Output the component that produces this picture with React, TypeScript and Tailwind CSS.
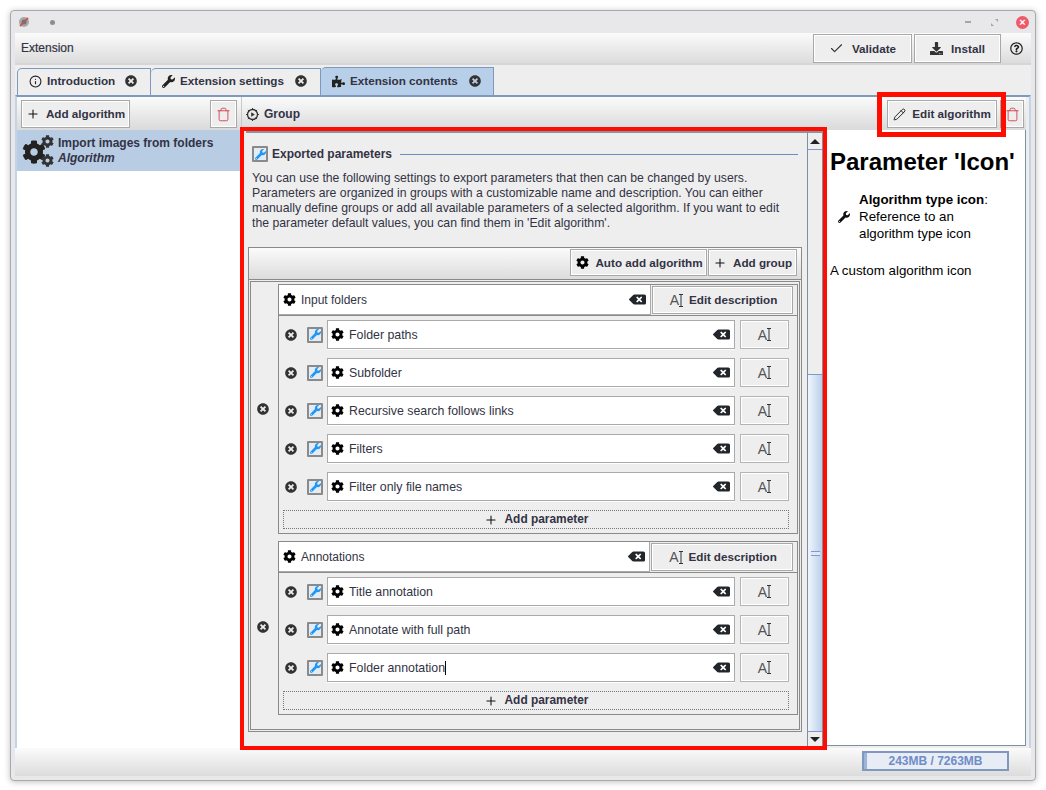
import React from 'react';
import { Check, Info, Pencil, Plus, Trash } from 'lucide-react';
import { FaBackspace, FaCog, FaDownload, FaPuzzlePiece, FaRegQuestionCircle, FaTimesCircle, FaWrench } from 'react-icons/fa';

const barGradient = 'bg-gradient-to-b from-[#fbfbfb] to-[#dcdcdc]';
const buttonClass = 'flex items-center justify-center gap-2 border border-[#a8a8a8] bg-[#eeeeee] text-[11.7px] font-bold text-[#333344] shadow-[inset_0_0_0_1px_#ffffff]';

const TextIcon = () => (
  <span className="flex items-center text-[14px] leading-none font-normal text-[#555]">
    A
    <svg width="4" height="13" viewBox="0 0 4 13">
      <path d="M0 .5h4M0 12.5h4M2 0v13" stroke="#333" fill="none" />
    </svg>
  </span>
);

const ExportIcon = () => (
  <span className="flex h-4 w-4 shrink-0 items-center justify-center rounded-[1px] border-2 border-[#8a8a8a] bg-[#e3ebf5]">
    <FaWrench size={11} className="text-[#2196f3]" />
  </span>
);

const GroupIcon = () => (
  <svg width="13" height="13" viewBox="0 0 13 13" className="shrink-0">
    <circle cx="6.5" cy="6.5" r="5" fill="none" stroke="#333" strokeWidth="1.3" />
    <path d="M6.5 0v2M6.5 11v2M0 6.5h2M11 6.5h2M1.9 1.9l1.3 1.3M9.8 9.8l1.3 1.3M11.1 1.9L9.8 3.2M3.2 9.8l-1.3 1.3" stroke="#333" />
    <path d="M5.2 4.2v4.6l3.6-2.3z" fill="#333" />
  </svg>
);

const ClearIcon = () => <FaBackspace size={17} className="shrink-0 text-[#22262b]" />;

const TabClose = () => <FaTimesCircle size={12} className="text-[#333]" />;

const AddParameter = () => (
  <div className="mr-[8px] ml-[4px] flex h-[19px] items-center justify-center gap-[7px] border border-dotted border-[#777] pt-[1px] text-[11.9px] font-bold text-[#333344]">
    <Plus size={14} strokeWidth={1.8} className="text-[#111]" />
    Add parameter
  </div>
);

const ParamRow = ({ name, caret }: { name: string; caret?: boolean }) => (
  <div className="flex h-[29px] items-center">
    <div className="w-[28px] pl-[6px]">
      <FaTimesCircle size={12} className="text-[#333]" />
    </div>
    <ExportIcon />
    <div className="ml-[4px] flex h-[29px] w-[408px] items-center border border-[#aaaaaa] bg-white pr-[4px] pl-[3px] shadow-[0_1px_0_#ffffff]">
      <FaCog size={13} className="shrink-0 text-black" />
      <span className="ml-[5px] flex-1 pt-[1px] text-[12.35px] text-[#333344]">
        {name}
        {caret && <span className="inline-block h-[14px] w-px translate-y-[3px] bg-black" />}
      </span>
      <ClearIcon />
    </div>
    <div className="ml-[5px] flex h-[29px] w-[49px] items-center justify-center border border-[#b4b4b4] bg-[#eeeeee] shadow-[inset_0_0_0_1px_#ffffff]">
      <TextIcon />
    </div>
  </div>
);

const ParamGroup = ({ name, inputWidth, params, closeTop, caret }: { name: string; inputWidth: string; params: string[]; closeTop: string; caret?: string }) => (
  <div className="relative ml-[27px] w-[520px] border border-[#8a8a8a] pb-[4px]">
    <FaTimesCircle size={12} className={`absolute left-[-22px] text-[#333] ${closeTop}`} />
    <div className="flex h-[31px] items-start border-b border-[#8a8a8a]">
      <div className={`flex h-[30px] items-center border-r border-b border-[#aaaaaa] bg-white pr-[4px] pl-[4px] ${inputWidth}`}>
        <FaCog size={13} className="shrink-0 text-black" />
        <span className="ml-[5px] flex-1 text-[12px] text-[#333344]">{name}</span>
        <ClearIcon />
      </div>
      <div className={`${buttonClass} mt-[1px] mr-[4px] ml-[1px] h-[28px] flex-1 gap-[6px] pl-[2px]`}>
        <TextIcon />
        Edit description
      </div>
    </div>
    <div className="flex flex-col gap-[9px] pt-[4px] pb-[9px]">
      {params.map(p => (
        <ParamRow key={p} name={p} caret={p === caret} />
      ))}
    </div>
    <AddParameter />
  </div>
);

const Scrollbar = () => (
  <div className="flex w-[16px] shrink-0 flex-col border-x border-[#7f8fa3] bg-[#eeeeee]">
    <div className="flex h-[17px] items-center justify-center border-b border-[#7c9ad0]">
      <div className="h-0 w-0 border-x-[5px] border-b-[5px] border-x-transparent border-b-[#222]" />
    </div>
    <div className="h-[224px]" />
    <div className="flex h-[358px] items-center justify-center border-y border-[#7c9ad0] bg-gradient-to-r from-[#f2f6fb] to-[#b9d0ea]">
      <div className="h-[5px] w-[9px] border-y border-[#7c9ad0] bg-[#dfe8f4]" />
    </div>
    <div className="flex flex-1 items-center justify-center">
      <div className="h-0 w-0 border-x-[5px] border-t-[5px] border-x-transparent border-t-[#222]" />
    </div>
  </div>
);

export default function App() {
  return (
    <div className="relative h-[790px] w-[1046px] overflow-hidden bg-white pt-[10px] pl-[10px] font-['Liberation_Sans',sans-serif]">
      <div className="flex h-[771px] w-[1026px] flex-col rounded-[4px] border border-[#a9a9a9] bg-[#e8e8ea] shadow-[0_1px_6px_rgba(0,0,0,0.25)]">
        {/* title bar */}
        <div className="flex h-[22px] shrink-0 items-center pr-[6px] pl-[6px]">
          <svg width="14" height="14" viewBox="0 0 14 14">
            <circle cx="7" cy="7" r="5" fill="#a8a8a8" />
            <path d="M3 11L11 3" stroke="#c25b5b" strokeWidth="2" />
            <circle cx="7" cy="7" r="2.5" fill="#8c6a6a" />
          </svg>
          <div className="ml-[19px] h-[5px] w-[5px] rounded-full bg-[#8b8e94]" />
          <div className="flex-1" />
          <div className="h-[2px] w-[6px] bg-[#a3a6ab]" />
          <svg width="7" height="7" viewBox="0 0 7 7" className="ml-[20px]">
            <path d="M4 0h3v3zM0 4v3h3z" fill="#a3a6ab" />
          </svg>
          <div className="ml-[18px] flex h-[13px] w-[13px] items-center justify-center rounded-full bg-[#ee5a6a] text-[11px] leading-none font-bold text-white">×</div>
        </div>

        <div className="mx-[4px] mb-[4px] flex min-h-0 flex-1 flex-col bg-[#eeeeee]">
          {/* toolbar */}
          <div className={`flex h-[32px] shrink-0 items-center border-b-2 border-[#d6d6d6] pl-[6px] ${barGradient}`}>
            <span className="flex-1 text-[12px] text-[#333344] [-webkit-text-stroke:0.2px_#333344]">Extension</span>
            <div className={`${buttonClass} h-[29px] w-[99px] pt-[1px]`}>
              <Check size={15} strokeWidth={1.8} className="text-[#333]" />
              Validate
            </div>
            <div className={`${buttonClass} ml-[2px] h-[29px] w-[87px] pt-[1px]`}>
              <FaDownload size={13} className="text-[#333]" />
              Install
            </div>
            <div className="flex w-[30px] justify-center">
              <FaRegQuestionCircle size={13} className="text-[#222]" />
            </div>
          </div>

          {/* tabs */}
          <div className="mt-[2px] flex h-[28px] shrink-0 items-end pl-[2px]">
            <div className="flex h-[27px] w-[134px] items-center gap-[5px] rounded-tl-[5px] border border-b-0 border-[#7f98bd] bg-[#eeeeee] pb-[2px] pl-[11px] text-[11.7px] font-bold text-[#333344]">
              <Info size={13} strokeWidth={2} className="text-[#222]" />
              <span className="mr-[5px]">Introduction</span>
              <TabClose />
            </div>
            <div className="flex h-[27px] w-[170px] items-center gap-[5px] rounded-tl-[5px] border border-b-0 border-l-0 border-[#7f98bd] bg-[#eeeeee] pb-[2px] pl-[11px] text-[11.7px] font-bold text-[#333344]">
              <FaWrench size={13} className="text-[#222]" />
              <span className="mr-[6px]">Extension settings</span>
              <TabClose />
            </div>
            <div className="flex h-[28px] w-[173px] items-center gap-[5px] rounded-tl-[5px] border border-b-0 border-l-0 border-[#7f98bd] bg-[#b8cfe9] pb-[1px] pl-[11px] text-[11.7px] font-bold text-[#333344]">
              <FaPuzzlePiece size={13} className="text-[#222]" />
              <span className="mr-[6px]">Extension contents</span>
              <TabClose />
            </div>
          </div>

          {/* tab content */}
          <div className="flex min-h-0 flex-1 border-x-2 border-t-2 border-[#7f98bd] border-x-[#c3d3e8] pr-[3px]">
            {/* left panel */}
            <div className="flex w-[224px] shrink-0 flex-col">
              <div className={`flex h-[33px] shrink-0 items-start justify-between border-b-2 border-[#dcdcdc] px-[4px] pt-[3px] ${barGradient}`}>
                <div className={`${buttonClass} h-[28px] w-[109px] gap-[6px]`}>
                  <Plus size={14} strokeWidth={1.8} className="text-[#111]" />
                  Add algorithm
                </div>
                <div className={`${buttonClass} h-[28px] w-[27px]`}>
                  <Trash size={15} strokeWidth={1.4} className="text-[#d23b4c]" />
                </div>
              </div>
              <div className="flex h-[41px] shrink-0 items-center bg-[#b8cce4] pl-[5px]">
                <div className="relative h-[30px] w-[36px] shrink-0">
                  <FaCog size={24} className="absolute top-[4px] left-0 text-[#222]" />
                  <FaCog size={13} className="absolute top-[-1px] left-[19px] text-[#333]" />
                  <FaCog size={13} className="absolute top-[18px] left-[19px] text-[#333]" />
                </div>
                <div className="pt-[1px] text-[12px] leading-[15px] text-[#333344]">
                  <div className="font-bold">Import images from folders</div>
                  <div className="font-bold italic">Algorithm</div>
                </div>
              </div>
              <div className="flex-1 bg-white" />
            </div>

            {/* right panel */}
            <div className="flex min-w-0 flex-1 flex-col border-l border-[#c9c9c9]">
              <div className={`flex h-[33px] shrink-0 items-start border-b-2 border-[#dcdcdc] pt-[3px] pr-[2px] pl-[4px] ${barGradient}`}>
                <div className="flex h-[28px] flex-1 items-center">
                  <GroupIcon />
                  <span className="ml-[5px] text-[12px] font-bold text-[#333344]">Group</span>
                </div>
                <div className={`${buttonClass} h-[28px] w-[110px] gap-[6px]`}>
                  <Pencil size={13} strokeWidth={1.8} className="text-[#222]" />
                  <span className="font-bold">Edit algorithm</span>
                </div>
                <div className={`${buttonClass} ml-[3px] h-[28px] w-[24px]`}>
                  <Trash size={15} strokeWidth={1.4} className="text-[#d23b4c]" />
                </div>
              </div>

              <div className="flex min-h-0 flex-1 pb-[2px] pl-[4px]">
                <div className="flex w-[577px] shrink-0 border-t-3 border-[#8a949e] bg-[#eeeeee]">
                  <div className="min-w-0 flex-1 pt-[12px] pr-[5px] pl-[2px]">
                    <div className="ml-[4px] flex h-[18px] items-center">
                      <ExportIcon />
                      <span className="ml-[4px] text-[12px] font-bold text-[#333344]">Exported parameters</span>
                      <div className="mr-[4px] ml-[8px] h-px flex-1 bg-[#6f8cc0]" />
                    </div>
                    <p className="mt-[8px] ml-[4px] text-[12.25px] leading-[15px] whitespace-nowrap text-[#333344]">
                      You can use the following settings to export parameters that then can be changed by users.
                      <br />
                      Parameters are organized in groups with a customizable name and description. You can either
                      <br />
                      manually define groups or add all available parameters of a selected algorithm. If you want to edit
                      <br />
                      the parameter default values, you can find them in 'Edit algorithm'.
                    </p>
                    <div className="mt-[16px] border border-[#8a8a8a]">
                      <div className={`flex h-[32px] items-start justify-end border-b border-[#8a8a8a] pt-[1px] pr-[4px] ${barGradient}`}>
                        <div className={`${buttonClass} h-[27px] w-[137px] gap-[6px] pl-[2px]`}>
                          <FaCog size={13} className="text-black" />
                          Auto add algorithm
                        </div>
                        <div className={`${buttonClass} ml-[1px] h-[27px] w-[89px] gap-[6px]`}>
                          <Plus size={14} strokeWidth={1.8} className="text-[#111]" />
                          Add group
                        </div>
                      </div>
                      <div className="m-[1px] flex flex-col gap-[7px] border border-[#8a8a8a] pt-[2px] pb-[14px]">
                        <ParamGroup
                          name="Input folders"
                          inputWidth="w-[372px]"
                          closeTop="top-[118px]"
                          params={['Folder paths', 'Subfolder', 'Recursive search follows links', 'Filters', 'Filter only file names']}
                        />
                        <ParamGroup
                          name="Annotations"
                          inputWidth="w-[371px]"
                          closeTop="top-[79px]"
                          caret="Folder annotation"
                          params={['Title annotation', 'Annotate with full path', 'Folder annotation']}
                        />
                      </div>
                    </div>
                  </div>
                  <Scrollbar />
                </div>

                {/* documentation */}
                <div className="ml-[3px] flex-1 border-x border-b border-[#7f8fa3] bg-white pt-[18px] pl-[3px] text-[13.33px] leading-[17px] text-black">
                  <div className="text-[24px] leading-[28px] font-bold whitespace-nowrap">Parameter 'Icon'</div>
                  <div className="mt-[15px] flex">
                    <div className="flex w-[29px] shrink-0 items-center justify-end pr-[9px]">
                      <FaWrench size={12} className="text-[#111]" />
                    </div>
                    <div>
                      <b>Algorithm type icon</b>:
                      <br />
                      Reference to an
                      <br />
                      algorithm type icon
                    </div>
                  </div>
                  <div className="mt-[20px]">A custom algorithm icon</div>
                </div>
              </div>
            </div>
          </div>

          {/* status bar */}
          <div className={`flex h-[28px] shrink-0 items-start justify-end pt-[3px] pr-[22px] ${barGradient}`}>
            <div className="relative flex h-[20px] w-[147px] items-center justify-center border-2 border-[#7f98bd] bg-[#e8edf5] text-[12px] font-bold text-[#6f8cc8]">
              <div className="absolute top-0 left-0 h-full w-[3px] bg-[#9db5d8]" />
              243MB / 7263MB
            </div>
          </div>
        </div>
      </div>

      {/* red annotations over the screenshot */}
      <div className="pointer-events-none absolute top-[127px] left-[240px] h-[623px] w-[587px] border-4 border-[#ff0d00]" />
      <div className="pointer-events-none absolute top-[92px] left-[877px] h-[45px] w-[129px] border-[5px] border-[#ff0d00]" />
    </div>
  );
}
